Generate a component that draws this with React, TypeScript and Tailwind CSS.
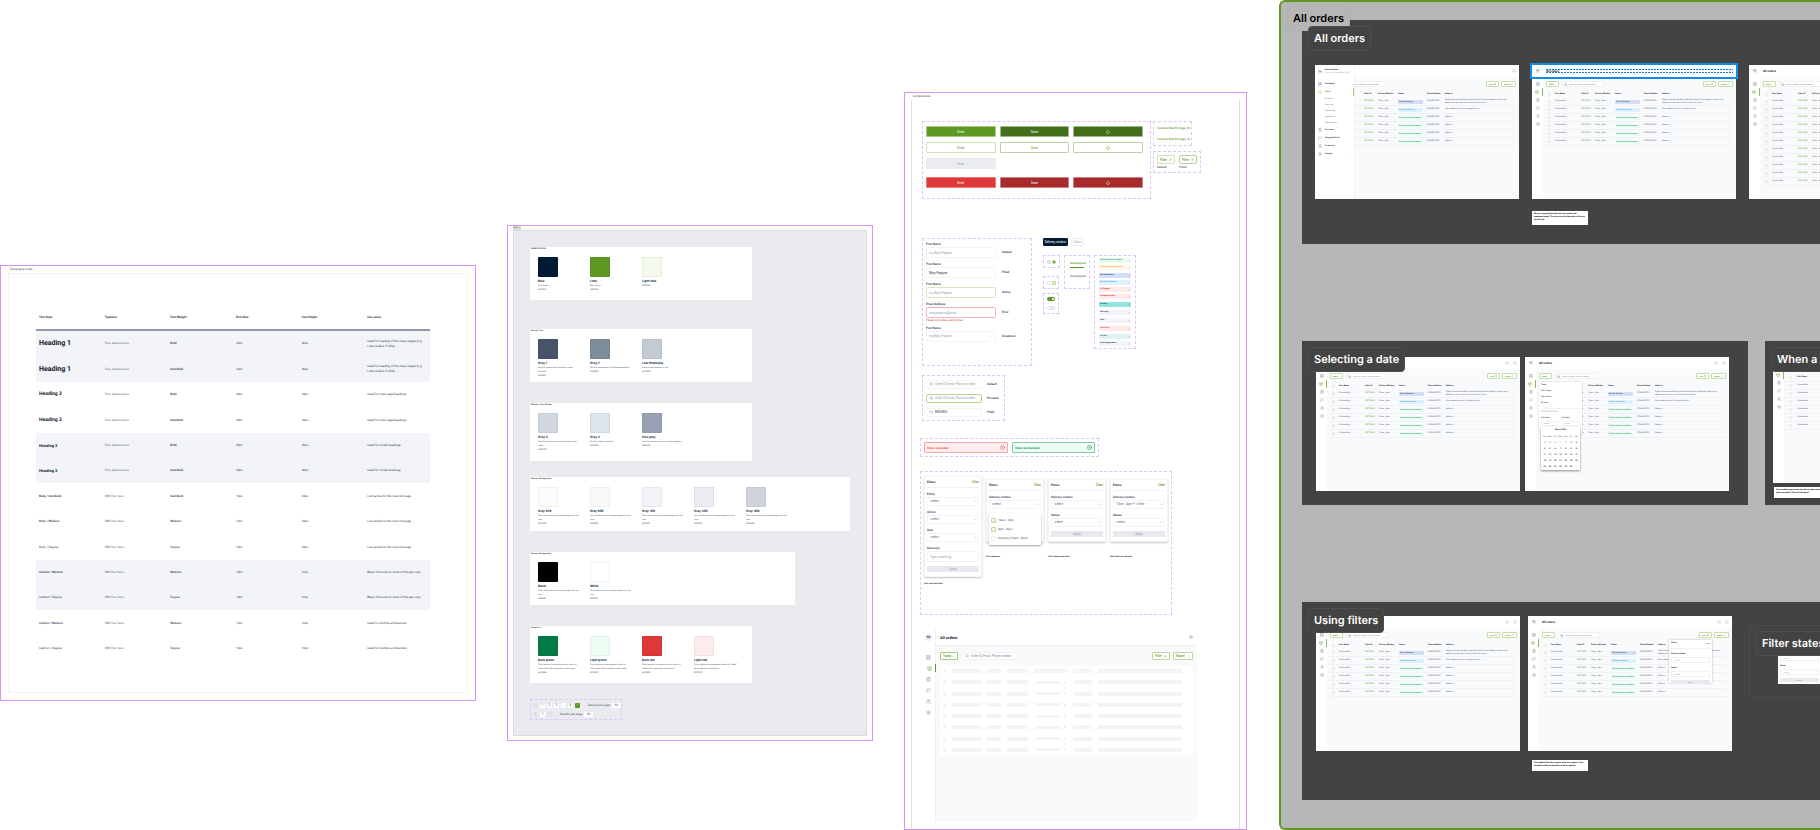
import React, { ReactNode, useId } from "react";
import {
  Bell,
  Box,
  ChevronDown,
  CircleX,
  ClipboardList,
  Flag,
  LayoutGrid,
  LoaderCircle,
  Search,
  Settings,
  SlidersHorizontal,
  Upload,
  Users,
} from "lucide-react";

/* ---------- shared pieces ---------- */

function Board({ label, className, children }: { label: string; className: string; children: ReactNode }) {
  return (
    <section className={`shrink-0 border border-[#db8fff] bg-white ${className}`}>
      <h2 className="h-[7px] pl-[8px] text-[3px] leading-[6px] text-[#444]">{label}</h2>
      {children}
    </section>
  );
}

function Group({ className, children }: { className: string; children?: ReactNode }) {
  return <div className={`shrink-0 rounded-[1px] border border-dashed border-[#dcc6fb] ${className}`}>{children}</div>;
}

/* ---------- typography board ---------- */

type TypeRow = [string, string, string, string, string, string, string, boolean];

const h1 = "text-[7px] font-bold text-[#101828]";
const h2 = "text-[5px] font-bold text-[#101828]";
const h3 = "text-[4px] font-bold text-[#101828]";

const typeRows: TypeRow[] = [
  ["Heading 1", h1, "Plus Jakarta Sans", "Bold", "32px", "40px", "Used for heading of the major pages (e.g Lists, Orders, Profile).", true],
  ["Heading 1", h1, "Plus Jakarta Sans", "Semibold", "32px", "40px", "Used for heading of the major pages (e.g Lists, Orders, Profile).", true],
  ["Heading 2", h2, "Plus Jakarta Sans", "Bold", "24px", "34px", "Used for inner page headings", false],
  ["Heading 2", h2, "Plus Jakarta Sans", "Semibold", "24px", "34px", "Used for inner page headings", false],
  ["Heading 3", h3, "Plus Jakarta Sans", "Bold", "20px", "28px", "Used for modal headings", true],
  ["Heading 3", h3, "Plus Jakarta Sans", "Semibold", "20px", "28px", "Used for modal headings", true],
  ["Body / Semibold", "text-[3px] font-bold", "IBM Plex Sans", "Semibold", "16px", "24px", "List names for the main list page.", false],
  ["Body / Medium", "text-[3px] font-medium", "IBM Plex Sans", "Medium", "16px", "24px", "List names for the main list page.", false],
  ["Body / Regular", "text-[3px]", "IBM Plex Sans", "Regular", "16px", "24px", "List names for the main list page.", false],
  ["Subtext / Medium", "text-[3px] font-medium", "IBM Plex Sans", "Medium", "14px", "21px", "Major font size for most of the app copy", true],
  ["Subtext / Regular", "text-[3px]", "IBM Plex Sans", "Regular", "14px", "21px", "Major font size for most of the app copy", true],
  ["Caption / Medium", "text-[3px] font-medium", "IBM Plex Sans", "Medium", "12px", "16px", "Used for tooltips and banners", false],
  ["Caption / Regular", "text-[3px]", "IBM Plex Sans", "Regular", "12px", "16px", "Used for tooltips and banners", false],
];

function TypographyBoard() {
  return (
    <Board label="Typography scale" className="mt-[265px] w-[476px] pb-[7px]">
      <div className="mx-[7px] border border-[#f3f3f3] px-[27px] pt-[31px] pb-[31px]">
        <table className="w-[394px] table-fixed border-separate border-spacing-0 text-left text-[3px] leading-[5px] text-[#344054]">
          <thead>
            <tr>
              {["Text Style", "Typeface", "Font Weight", "Font Size", "Line Height", "Use cases"].map((t) => (
                <th key={t} className="h-[26px] border-b-2 border-[#8f97ab] pl-[3px] font-bold text-[#1d2939]">
                  {t}
                </th>
              ))}
            </tr>
          </thead>
          <tbody>
            {typeRows.map(([name, style, face, weight, size, line, use, shaded], i) => (
              <tr key={i} className={`${i % 5 === 1 || i % 5 === 3 ? "h-[26px]" : "h-[25px]"} ${shaded ? "bg-[#f2f4f7]" : ""}`}>
                <td className={`pl-[3px] ${style}`}>{name}</td>
                <td className="pl-[3px] text-[#667085]">{face}</td>
                <td className={weight === "Regular" ? "pl-[3px]" : weight === "Medium" ? "pl-[3px] font-medium" : "pl-[3px] font-bold"}>{weight}</td>
                <td className="pl-[3px]">{size}</td>
                <td className="pl-[3px]">{line}</td>
                <td className="pr-[3px] pl-[3px]">{use}</td>
              </tr>
            ))}
          </tbody>
        </table>
      </div>
    </Board>
  );
}

/* ---------- colour board ---------- */

type Swatch = [string, string, string, string];

function SwatchCard({ title, className, items }: { title: string; className: string; items: Swatch[] }) {
  return (
    <article className={`bg-white px-[8px] ${className}`}>
      <h3 className="-ml-[7px] h-[10px] pt-px text-[2px] leading-[3px] font-medium text-[#222]">{title}</h3>
      <ul className="flex">
        {items.map(([name, color, note, hex]) => (
          <li key={name} className="w-[52px] shrink-0 pr-[9px] text-[2px] leading-[4px] text-[#344054]">
            <div className={`size-[20px] rounded-[1px] border border-black/5 ${color}`} />
            <h4 className="mt-[2px] text-[3px] leading-[5px] font-bold text-[#0b2540] [font-family:Inter,sans-serif]">{name}</h4>
            {note && <p>{note}</p>}
            <p>{hex}</p>
          </li>
        ))}
      </ul>
    </article>
  );
}

const discretion = "To be used at discretion depending on the use case.";

function PageButton({ children, tone = "bg-white text-[#344054]" }: { children: ReactNode; tone?: string }) {
  return <button className={`h-[5px] w-[5px] rounded-[1px] text-center text-[3px] leading-[5px] ${tone}`}>{children}</button>;
}

function ColorBoard() {
  const muted = "bg-[#dfe4ec] text-[#98a2b3]";
  return (
    <section className="mt-[225px] ml-[31px] w-[366px] shrink-0 border border-[#db8fff] bg-white px-[5px] pb-[4px]">
      <h2 className="h-[4px] w-[8px] bg-[#d9d9d9] text-[2px] leading-[4px] text-[#444]">Colors</h2>
      <div className="border border-[#dadbdd] bg-[#eaebef] pt-[16px] pb-[15px] pl-[16px]">
        <SwatchCard
          title="BRAND COLORS"
          className="h-[53px] w-[222px]"
          items={[
            ["Blue", "bg-[#021b35]", "Text Colour", "#021B35"],
            ["Lime", "bg-[#5d9922]", "Main Colour", "#5D9922"],
            ["Light lime", "bg-[#f3f9eb]", "", "#F3F9EB"],
          ]}
        />
        <SwatchCard
          title="Neutral / Text"
          className="mt-[29px] h-[53px] w-[222px]"
          items={[
            ["Grey 1", "bg-[#475467]", "Used for subtext that need lower visual hierarchy", "#475467"],
            ["Grey 2", "bg-[#7c8c99]", "Used for placeholder text & disabled buttons", "#7C8C99"],
            ["Low Emphasis", "bg-[#c3cbd3]", "Used for low emphasis in text", "#C3CBD3"],
          ]}
        />
        <SwatchCard
          title="Neutral / Lines, Borders"
          className="mt-[21px] h-[58px] w-[222px]"
          items={[
            ["Grey 3", "bg-[#d0d7df]", "Used for borders on secondary buttons and cards", "#D0D7DF"],
            ["Grey 4", "bg-[#dde5ed]", "Used for dividers and lines", "#DDE5ED"],
            ["Icon grey", "bg-[#98a2b3]", "Used for inactive icons in the side navigation", "#98A2B3"],
          ]}
        />
        <SwatchCard
          title="Neutral / Backgrounds"
          className="mt-[16px] h-[54px] w-[320px]"
          items={[
            ["Gray 025", "bg-[#fcfcfd]", discretion, "#FCFCFD"],
            ["Gray 050", "bg-[#f9fafb]", discretion, "#F9FAFB"],
            ["Gray 100", "bg-[#f2f4f7]", discretion, "#F2F4F7"],
            ["Gray 200", "bg-[#eaecf0]", discretion, "#EAECF0"],
            ["Gray 300", "bg-[#d0d5dd]", discretion, "#D0D5DD"],
          ]}
        />
        <SwatchCard
          title="Neutral / Backgrounds"
          className="mt-[21px] h-[53px] w-[265px]"
          items={[
            ["Black", "bg-black", discretion, "#000000"],
            ["White", "bg-white", discretion, "#FFFFFF"],
          ]}
        />
        <SwatchCard
          title="Semantics"
          className="mt-[21px] h-[57px] w-[222px]"
          items={[
            ["Dark green", "bg-[#027a48]", "To be used as the border and text colour for “successful” alerts and toast notifications", "#027A48"],
            ["Light green", "bg-[#ecfdf3]", "To be used as the background colour for “successful” alerts and toast notifications", "#ECFDF3"],
            ["Dark red", "bg-[#df3838]", "To be used as the border and text colour for “failed” alerts and toast notifications", "#DF3838"],
            ["Light red", "bg-[#ffecec]", "To be used as the background colour for “failed” alerts and toast notifications", "#FFECEC"],
          ]}
        />
        <Group className="mt-[16px] flex h-[21px] w-[92px] flex-col justify-center gap-[4px] pl-[2px] text-[3px] leading-[5px] text-[#475467]">
          <div className="flex items-center gap-[2px]">
            <PageButton tone={muted}>‹</PageButton>
            <PageButton>1</PageButton>
            <PageButton>2</PageButton>
            <PageButton>3</PageButton>
            <PageButton>…</PageButton>
            <PageButton>6</PageButton>
            <PageButton tone="bg-[#5d9922] text-white">›</PageButton>
            <span className="ml-[6px] whitespace-nowrap">Results per page</span>
            <span className="h-[5px] w-[9px] bg-white text-center">50</span>
          </div>
          <div className="flex items-center gap-[2px]">
            <PageButton tone={muted}>‹</PageButton>
            <PageButton>1</PageButton>
            <PageButton tone={muted}>›</PageButton>
            <span className="ml-[6px] whitespace-nowrap">Results per page</span>
            <span className="h-[5px] w-[9px] bg-white text-center">50</span>
          </div>
        </Group>
      </div>
    </section>
  );
}

/* ---------- component board ---------- */

function WideButton({ tone, children }: { tone: string; children: ReactNode }) {
  return (
    <button className={`flex h-[11px] items-center justify-center rounded-[1px] border text-[3px] leading-[4px] ${tone}`}>
      {children}
    </button>
  );
}

function ButtonGroup() {
  const spin = <LoaderCircle size={4} strokeWidth={3} />;
  const lime = "border-[#a5cb7d] bg-[#5d9922] text-white";
  const dark = "border-[#9fb886] bg-[#446f1a] text-white";
  const line = "border-[#cde3b5] bg-white text-[#5d9922]";
  const lineDark = "border-[#bdd0aa] bg-white text-[#5d9922]";
  const red = "border-[#e77] bg-[#df3838] text-white";
  const redDark = "border-[#c98080] bg-[#a82a2a] text-white";
  return (
    <Group className="h-[78px] w-[229px] pt-[4px] pl-[3px]">
      <div className="grid w-[217px] grid-cols-3 gap-x-[4px] gap-y-[5px]">
        <WideButton tone={lime}>Enter</WideButton>
        <WideButton tone={dark}>Done</WideButton>
        <WideButton tone={dark}>{spin}</WideButton>
        <WideButton tone={line}>Enter</WideButton>
        <WideButton tone={lineDark}>Done</WideButton>
        <WideButton tone={lineDark}>{spin}</WideButton>
        <WideButton tone="border-[#eaecf0] bg-[#eaecf0] text-[#98a2b3]">Enter</WideButton>
      </div>
      <div className="mt-[8px] grid w-[217px] grid-cols-3 gap-x-[4px]">
        <WideButton tone={red}>Enter</WideButton>
        <WideButton tone={redDark}>Done</WideButton>
        <WideButton tone={redDark}>{spin}</WideButton>
      </div>
    </Group>
  );
}

function FilterButton({ tone, label }: { tone: string; label: string }) {
  return (
    <div className="flex flex-col">
      <button className={`flex h-[9px] w-[18px] items-center justify-center gap-[2px] rounded-[2px] border text-[3px] leading-[4px] font-medium text-[#5d9922] ${tone}`}>
        Filter
        <SlidersHorizontal size={3} strokeWidth={1} />
      </button>
      <span className="mt-px text-[3px] leading-[4px] text-[#1d2939]">{label}</span>
    </div>
  );
}

function Field({ label, value, placeholder, tone, state, error }: { label: string; value?: string; placeholder?: string; tone: string; state: string; error?: string }) {
  const id = useId();
  return (
    <div className="flex">
      <div className="w-[70px]">
        <label htmlFor={id} className="block h-[4px] text-[3px] leading-[3px] font-medium text-[#1d2939]">
          {label}
        </label>
        <input
          id={id}
          defaultValue={value}
          placeholder={placeholder}
          className={`block h-[11px] w-full rounded-[2px] border bg-white px-[2px] text-[3px] leading-[4px] text-[#1d2939] placeholder:text-[#98a2b3] ${tone}`}
        />
        {error && <p className="mt-px text-[3px] leading-[3px] text-[#df3838]">{error}</p>}
      </div>
      <span className="mt-[7px] ml-[6px] text-[3px] leading-[4px] font-medium text-[#1d2939]">{state}</span>
    </div>
  );
}

function FieldGroup() {
  const id = useId();
  return (
    <Group className="flex h-[128px] w-[110px] flex-col gap-[5px] pt-[4px] pl-[3px]">
      <Field label="First Name" placeholder="e.g Mary Poppins" tone="border-[#f2f4f7]" state="Default" />
      <Field label="First Name" value="Mary Poppins" tone="border-[#f2f4f7]" state="Filled" />
      <Field label="First Name" placeholder="e.g Mary Poppins" tone="border-[#d3e6be]" state="Active" />
      <Field label="Email Address" placeholder="marypoppins@gmail" tone="border-[#f7b5b5]" state="Error" error="Please provide a valid email" />
      <div className="flex">
        <div className="relative w-[70px]">
          <label htmlFor={id} className="block h-[4px] text-[3px] leading-[3px] font-medium text-[#1d2939]">
            First Name
          </label>
          <select id={id} className="block h-[11px] w-full appearance-none rounded-[2px] border border-[#f2f4f7] bg-white px-[2px] text-[3px] text-[#98a2b3]">
            <option>e.g Mary Poppins</option>
          </select>
          <ChevronDown size={3} className="absolute right-[3px] bottom-[4px] text-[#98a2b3]" />
        </div>
        <span className="mt-[7px] ml-[6px] text-[3px] leading-[4px] font-medium text-[#1d2939]">Dropdown</span>
      </div>
    </Group>
  );
}

function SearchField({ value, tone, state }: { value?: string; tone: string; state: string }) {
  return (
    <div className="flex items-center">
      <label className={`flex h-[9px] w-[56px] items-center gap-[2px] rounded-[2px] border bg-white pl-[2px] ${tone}`}>
        <Search size={4} className="shrink-0 text-[#7c8c99]" aria-label="Search" />
        <input defaultValue={value} placeholder="Order ID, Email, Phone number" className="h-[5px] w-[44px] text-[3px] leading-[4px] text-[#1d2939] placeholder:text-[#98a2b3]" />
      </label>
      <span className="ml-[5px] text-[3px] leading-[4px] font-medium text-[#1d2939]">{state}</span>
    </div>
  );
}

const statuses: [string, string][] = [
  ["Delivered within window", "mb-[2px] bg-[#e8faf0] text-[#1d9a5f]"],
  ["Delivered outside window", "mb-[3px] bg-[#fff7e9] text-[#f5a532]"],
  ["Out for delivery", "mb-[2px] bg-[#d5def4] text-[#27407c]"],
  ["Ready for delivery", "mb-[2px] bg-[#def3ff] text-[#3aa6e8]"],
  ["QA flagged", "mb-[2px] bg-[#ffe9e9] text-[#df3838]"],
  ["Incomplete order", "mb-[3px] bg-[#ffe9e9] text-[#df3838]"],
  ["Routing", "mb-[3px] bg-[#95e3df] text-[#12605c]"],
  ["Sourcing", "mb-[3px] bg-[#f2f4f7] text-[#344054]"],
  ["Paid", "mb-[3px] bg-[#f2f4f7] text-[#344054]"],
  ["Cancelled", "mb-[3px] bg-[#ffe9e9] text-[#df3838]"],
  ["Packed", "mb-[2px] bg-[#e2f2f1] text-[#256e68]"],
  ["Awaiting payment", "bg-[#f2f4f7] text-[#344054]"],
];

function StatusGroup() {
  return (
    <Group className="h-[94px] w-[42px] px-[4px] pt-[2px]">
      <ul>
        {statuses.map(([name, tone]) => (
          <li key={name} className={`flex h-[5px] items-center justify-between rounded-[1px] px-px text-[2px] leading-[5px] font-bold whitespace-nowrap ${tone}`}>
            {name}
            <ChevronDown size={2} strokeWidth={3} />
          </li>
        ))}
      </ul>
    </Group>
  );
}

function ControlsColumn() {
  return (
    <div className="ml-[11px] w-[93px]">
      <div className="flex gap-[3px] text-[3px] leading-[6px]">
        <button className="h-[8px] w-[25px] rounded-[1px] border border-[#021b35] bg-[#021b35] whitespace-nowrap text-white">Delivery window</button>
        <button className="h-[8px] w-[13px] rounded-[2px] border border-[#eaecf0] text-[#98a2b3]">Status</button>
      </div>
      <div className="mt-[9px] flex gap-[4px]">
        <div>
          <Group className="flex h-[13px] w-[17px] items-center justify-center gap-[1px]">
            <input type="radio" name="sample" aria-label="Off" className="size-[4px] appearance-none rounded-full border border-[#c3cbd3]" />
            <input type="radio" name="sample" aria-label="On" defaultChecked className="size-[4px] appearance-none rounded-full border border-[#b5d68f] bg-[#5d9922]" />
          </Group>
          <Group className="mt-[8px] flex h-[13px] w-[16px] items-center justify-center gap-[1px]">
            <input type="checkbox" aria-label="Unticked" className="size-[4px] appearance-none rounded-[1px] border border-[#dfe4ea]" />
            <input type="checkbox" aria-label="Ticked" defaultChecked className="size-[4px] appearance-none rounded-[1px] border border-[#b5d68f] bg-[#e8f3da]" />
          </Group>
          <Group className="mt-[4px] flex h-[21px] w-[16px] flex-col items-center justify-center gap-[5px]">
            <label className="flex h-[4px] w-[8px] justify-end rounded-full bg-[#5d9922] p-px">
              <input type="checkbox" role="switch" aria-label="Enabled" defaultChecked className="size-[2px] appearance-none rounded-full bg-white" />
            </label>
            <label className="flex h-[4px] w-[8px] rounded-full bg-[#e4e7ec] p-px">
              <input type="checkbox" role="switch" aria-label="Disabled" className="size-[2px] appearance-none rounded-full bg-white" />
            </label>
          </Group>
        </div>
        <Group className="h-[34px] w-[26px] px-[5px] pt-[5px] text-[3px] leading-[5px] font-medium">
          <a href="#unassigned" className="block border-b border-[#5d9922] pb-px whitespace-nowrap text-[#5d9922]">
            Unassigned
          </a>
          <a href="#unassigned" className="mt-[6px] block whitespace-nowrap text-[#667085]">
            Unassigned
          </a>
        </Group>
        <StatusGroup />
      </div>
    </div>
  );
}

function FilterSelect({ label, value }: { label: string; value: string }) {
  const id = useId();
  return (
    <div className="relative mt-[4px]">
      <label htmlFor={id} className="block text-[3px] leading-[4px] font-medium text-[#1d2939]">
        {label}
      </label>
      <select id={id} className="mt-px block h-[9px] w-full appearance-none rounded-[1px] border border-[#f2f4f7] bg-white px-[2px] text-[3px] text-[#667085]">
        <option>{value}</option>
      </select>
      <ChevronDown size={3} className="absolute right-[2px] bottom-[3px] text-[#667085]" />
    </div>
  );
}

function FilterPanel({ children, caption, className }: { children: ReactNode; caption: string; className: string }) {
  return (
    <div className="w-[58px]">
      <div className={`relative rounded-[1px] border border-[#f2f4f7] bg-white px-[2px] pb-[3px] shadow-[0_1px_2px_rgba(16,24,40,0.25)] ${className}`}>
        <div className="flex h-[11px] items-center justify-between border-b border-[#f0f1f4] text-[3px] leading-[4px]">
          <h4 className="font-bold text-[#101828]">Filters</h4>
          <button className="font-medium text-[#5d9922]">Clear</button>
        </div>
        {children}
      </div>
      <p className="text-[2px] leading-[3px] font-bold whitespace-nowrap text-[#101828]">{caption}</p>
    </div>
  );
}

function ApplyButton({ className }: { className: string }) {
  return <button className={`block h-[6px] w-full bg-[#e7e9ee] text-[3px] leading-[6px] text-[#98a2b3] ${className}`}>Apply</button>;
}

function FilterGroup() {
  const id = useId();
  return (
    <Group className="mt-[14px] flex h-[144px] w-[252px] items-start gap-[4px] pt-[4px] pl-[3px]">
      <FilterPanel caption="Filter with input field" className="mb-[6px] h-[101px]">
        <FilterSelect label="Entity" value="-select-" />
        <FilterSelect label="Action" value="-select-" />
        <FilterSelect label="User" value="-select-" />
        <label htmlFor={id} className="mt-[4px] block text-[3px] leading-[4px] font-medium text-[#1d2939]">
          Device(s)
        </label>
        <input id={id} placeholder="Type something" className="mt-px block h-[11px] w-full rounded-[1px] border border-[#f2f4f7] px-[2px] text-[3px] placeholder:text-[#98a2b3]" />
        <ApplyButton className="mt-[4px]" />
      </FilterPanel>
      <div className="mt-[3px] flex gap-[4px]">
        <FilterPanel caption="Filter dropdown" className="mb-[14px] h-[63px]">
          <FilterSelect label="Delivery window" value="-select-" />
          <div className="absolute top-[33px] left-[2px] flex h-[32px] w-[52px] flex-col justify-center gap-[4px] rounded-[1px] bg-white pl-[2px] text-[3px] leading-[5px] text-[#475467] shadow-[0_1px_2px_rgba(16,24,40,0.4)]">
            {["10am - 4pm", "4pm - 8pm", "Anytime (10am - 8pm)"].map((t, i) => (
              <label key={t} className="flex items-center gap-[2px] whitespace-nowrap">
                <input type="checkbox" defaultChecked={i < 2} className="size-[5px] appearance-none rounded-[1px] border border-[#eaecf0] checked:border-[#bcd99b] checked:bg-[#eff7e5]" />
                {t}
              </label>
            ))}
          </div>
        </FilterPanel>
        <FilterPanel caption="Filter without input field" className="mb-[14px] h-[63px]">
          <FilterSelect label="Delivery window" value="-select-" />
          <FilterSelect label="Status" value="-select-" />
          <ApplyButton className="mt-[4px]" />
        </FilterPanel>
        <FilterPanel caption="After filters are selected" className="mb-[14px] h-[63px]">
          <FilterSelect label="Delivery window" value="10am - 4pm + 1 other" />
          <FilterSelect label="Status" value="-select-" />
          <ApplyButton className="mt-[4px]" />
        </FilterPanel>
      </div>
    </Group>
  );
}

const navIcons = [LayoutGrid, Box, ClipboardList, Flag, Users, Settings];

function Bar({ className }: { className: string }) {
  return <span className={`h-[4px] shrink-0 rounded-[1px] bg-[#f2f4f7] ${className}`} />;
}

function SkeletonApp() {
  return (
    <div className="mt-[14px] ml-[3px] flex h-[193px] w-[274px]">
      <nav className="flex w-[13px] shrink-0 flex-col items-center border-r border-[#eff1f4] pt-[5px] pr-px">
        <span className="mb-[12px] h-[7px] w-[7px] rounded-full bg-[#eaecf0] text-center text-[3px] leading-[7px] font-bold text-[#1d2939]">EA</span>
        {navIcons.map((Icon, i) => (
          <a
            key={i}
            href="#nav"
            aria-label="Section"
            className={
              i === 1
                ? "-mr-[2px] mb-[3px] flex h-[8px] w-[13px] items-center border-r border-[#5d9922] pl-[4px] text-[#5d9922]"
                : "mb-[3px] flex h-[8px] items-center text-[#8f97ab]"
            }
          >
            <Icon size={5} />
          </a>
        ))}
      </nav>
      <div className="flex-1 bg-[#f9fafb]">
        <header className="flex h-[17px] items-center justify-between border-b border-[#eff1f4] bg-white px-[4px]">
          <h3 className="text-[4px] leading-[5px] font-bold text-[#101828]">All orders</h3>
          <Bell size={4} className="text-[#475467]" />
        </header>
        <div className="px-[4px] pt-[6px]">
          <div className="flex h-[8px] items-center text-[3px] leading-[4px]">
            <button className="h-[8px] w-[18px] rounded-[1px] border border-[#a5cb7d] bg-white font-medium text-[#5d9922]">Today ⌄</button>
            <label className="ml-[4px] flex h-[8px] w-[57px] items-center gap-[2px] rounded-[2px] border border-[#eff1f4] bg-white pl-[2px]">
              <Search size={4} className="text-[#7c8c99]" aria-label="Search" />
              <input placeholder="Order ID, Email, Phone number" className="h-[5px] w-[46px] placeholder:text-[#7c8c99]" />
            </label>
            <button className="ml-auto flex h-[8px] w-[18px] items-center justify-center gap-[2px] rounded-[1px] border border-[#bcd99b] bg-white font-medium text-[#5d9922]">
              Filter <SlidersHorizontal size={3} strokeWidth={1} />
            </button>
            <button className="ml-[3px] flex h-[8px] w-[20px] items-center justify-center gap-[2px] rounded-[1px] border border-[#bcd99b] bg-white font-medium text-[#5d9922]">
              Export <Upload size={3} strokeWidth={1} />
            </button>
          </div>
          <div className="mt-[6px] flex h-[89px] flex-col justify-between bg-white px-[3px] py-[3px]">
            {[0, 1, 2, 3, 4, 5, 6, 7].map((i) => (
              <div key={i} className="flex items-center">
                <Bar className="w-[3px]" />
                <Bar className="ml-[6px] w-[29px]" />
                <Bar className="ml-[6px] w-[14px]" />
                <Bar className="ml-[6px] w-[21px]" />
                {i === 0 ? (
                  <Bar className="ml-[6px] w-[33px]" />
                ) : (
                  <span className="ml-[7px] flex w-[32px] items-center gap-[3px]">
                    <span className="h-[3px] w-[26px] rounded-[1px] bg-[#f2f4f7]" />
                    <span className="size-px bg-[#d0d5dd]" />
                  </span>
                )}
                <Bar className="ml-[6px] w-[19px]" />
                <Bar className="ml-[6px] w-[84px]" />
              </div>
            ))}
          </div>
        </div>
      </div>
    </div>
  );
}

function ComponentBoard() {
  return (
    <Board label="Components" className="mt-[92px] ml-[31px] w-[343px]">
      <div className="mx-[6px] border-x border-[#dedede] pt-[21px] pb-[7px] pl-[8px]">
        <div className="ml-[2px] flex items-start gap-[2px]">
          <ButtonGroup />
          <div>
            <Group className="h-[25px] w-[39px] pt-[4px] pl-[3px] text-[3px] leading-[5px] font-medium whitespace-nowrap text-[#5d9922]">
              <p>Yummie Red Portage, IA</p>
              <p className="mt-[6px]">Yummie Red Portage, IA</p>
            </Group>
            <Group className="mt-[5px] flex h-[22px] w-[48px] gap-[4px] pt-[3px] pl-[3px]">
              <FilterButton tone="border-[#cde3b5]" label="Default" />
              <FilterButton tone="border-[#b5cd9d]" label="Hover" />
            </Group>
          </div>
        </div>
        <div className="mt-[39px] ml-[2px] flex items-start">
          <FieldGroup />
          <ControlsColumn />
        </div>
        <Group className="mt-[9px] ml-[2px] flex h-[46px] w-[83px] flex-col justify-center gap-[5px] pl-[3px]">
          <SearchField tone="border-[#f2f4f7]" state="Default" />
          <SearchField tone="border-[#b5d68f]" state="Focused" />
          <SearchField tone="border-[#f2f4f7]" state="Filled" value="EKS2853" />
        </Group>
        <Group className="mt-[17px] flex h-[19px] w-[179px] items-center gap-[4px] px-[3px] text-[3px] leading-[4px] font-medium">
          <div role="alert" className="flex h-[11px] w-[84px] items-center justify-between rounded-[1px] border border-[#f0a8a8] bg-[#ffecec] px-[2px] text-[#df3838]">
            Order cancelled. <CircleX size={5} />
          </div>
          <div role="alert" className="flex h-[11px] w-[83px] items-center justify-between rounded-[1px] border border-[#8cc7aa] bg-[#ecfdf3] px-[2px] text-[#027a48]">
            Order rescheduled. <CircleX size={5} />
          </div>
        </Group>
        <FilterGroup />
        <SkeletonApp />
      </div>
    </Board>
  );
}

/* ---------- order screens ---------- */

const subItems = ["All orders", "Sourcing", "Processing", "Partial cost", "Order Tracker"];

function MenuLine({ icon: Icon, text, active, arrow }: { icon: typeof Box; text: string; active?: boolean; arrow?: boolean }) {
  return (
    <a href="#menu" className={`flex h-[8px] items-center gap-[3px] pl-[3px] text-[2px] font-bold ${active ? "border-r border-[#a9cd80] text-[#5d9922]" : "text-[#344054]"}`}>
      <Icon size={4} strokeWidth={1} />
      {text}
      {arrow && <ChevronDown size={2} className="mr-[2px] ml-auto" />}
    </a>
  );
}

function OpenMenu() {
  return (
    <nav className="absolute top-0 left-0 h-full w-[39px] bg-white text-[2px] leading-[3px] shadow-[0_0_1px_rgba(0,0,0,0.2)]">
      <div className="flex h-[15px] items-center gap-[3px] pb-[2px] pl-[3px]">
        <span className="size-[4px] rounded-full bg-[#dfe3ea] text-center leading-[4px] text-[#344054]">EA</span>
        <span className="whitespace-nowrap">
          <b className="block text-[#1d2939]">Azeez Ibrahim</b>
          <span className="block text-[#98a2b3]">Customer Happy Rep (CHR)</span>
        </span>
      </div>
      <MenuLine icon={LayoutGrid} text="Dashboard" />
      <MenuLine icon={Box} text="Orders" active arrow />
      <ul className="pl-[10px]">
        {subItems.map((t, i) => (
          <li key={t} className={`h-[6px] leading-[6px] ${i === 0 ? "text-[#5d9922]" : "text-[#667085]"}`}>
            {t}
          </li>
        ))}
      </ul>
      <MenuLine icon={ClipboardList} text="Discounts" />
      <MenuLine icon={Flag} text="Shopping Portal" />
      <MenuLine icon={Users} text="Customers" />
      <MenuLine icon={Settings} text="Settings" arrow />
    </nav>
  );
}

const longAddress = "Pyakit International Nursery And Primary School, Akajomo road, Long addresses can move to the second line, when...";

type ScreenProps = { rows?: number; plain?: boolean; twoIcons?: boolean; untitled?: boolean; height?: string; children?: ReactNode };

function OrderScreen({ rows = 6, plain, twoIcons, untitled, height = "h-[134px]", children }: ScreenProps) {
  return (
    <article className={`relative flex w-[204px] shrink-0 overflow-hidden bg-white text-[2px] leading-[3px] text-[#475467] ${height}`}>
      <nav className="flex w-[11px] shrink-0 flex-col items-center">
        <span className="mt-[4px] mb-[7px] size-[4px] rounded-full bg-[#dfe3ea] text-center leading-[4px] text-[#344054]">{untitled ? "" : "EA"}</span>
        {navIcons.map((Icon, i) => (
          <a
            key={i}
            href="#nav"
            aria-label="Section"
            className={i === 1 ? "flex h-[8px] w-full items-center justify-center border-r border-[#8fbb62] text-[#5d9922]" : "flex h-[8px] items-center text-[#8f97ab]"}
          >
            <Icon size={4} />
          </a>
        ))}
      </nav>
      <div className="min-w-0 flex-1 bg-[#f9fafb]">
        <header className="flex h-[12px] items-center justify-end gap-[4px] bg-white px-[3px]">
          {!untitled && <h4 className="mr-auto text-[3px] font-bold text-[#101828]">All orders</h4>}
          {twoIcons && <Search size={4} strokeWidth={1} />}
          <Bell size={4} strokeWidth={1} />
        </header>
        <div className="flex items-center px-[3px] pt-[4px]">
          <button className="h-[6px] w-[13px] rounded-[1px] border border-[#c5dfa8] bg-white leading-[4px] font-bold text-[#5d9922]">Today ⌄</button>
          <label className="ml-[3px] flex h-[6px] w-[42px] items-center gap-[2px] rounded-[1px] border border-[#f0f1f4] bg-white pl-px">
            <Search size={3} aria-label="Search" />
            <input placeholder="Order ID, Email, Phone number" className="h-[4px] w-[32px] placeholder:text-[#7c8c99]" />
          </label>
          <button className="ml-auto flex h-[6px] w-[13px] items-center justify-center gap-px rounded-[1px] border border-[#c5dfa8] bg-white leading-[4px] font-bold text-[#5d9922]">
            Filter <SlidersHorizontal size={2} />
          </button>
          <button className="ml-[2px] flex h-[6px] w-[15px] items-center justify-center gap-px rounded-[1px] border border-[#c5dfa8] bg-white leading-[4px] font-bold text-[#5d9922]">
            Export <Upload size={2} />
          </button>
        </div>
        <table className="mt-[4px] ml-[3px] w-[186px] table-fixed border-separate border-spacing-0 text-left whitespace-nowrap">
          <colgroup>
            <col className="w-[9px]" />
            <col className="w-[26px]" />
            <col className="w-[14px]" />
            <col className="w-[20px]" />
            <col className="w-[29px]" />
            <col className="w-[18px]" />
            <col />
            <col className="w-[4px]" />
          </colgroup>
          <thead>
            <tr className="h-[7px] text-[#1d2939]">
              <th className="pl-[2px]">
                <input type="checkbox" aria-label="Select all" className="block size-[3px] appearance-none rounded-[1px] border border-[#e4e7ec]" />
              </th>
              {["User Name", "Order ID", "Delivery Window", "Status", "Phone Number", "Address"].map((t) => (
                <th key={t} className="font-bold">
                  {t}
                </th>
              ))}
              <th />
            </tr>
          </thead>
          <tbody>
            {Array.from({ length: rows }, (_, i) => {
              const kind = plain ? 2 : Math.min(i, 2);
              return (
                <tr key={i}>
                  <td className="h-[8px] border-b border-[#f0f2f5] pl-[2px]">
                    <input type="checkbox" aria-label="Select order" className="block size-[3px] appearance-none rounded-[1px] border border-[#e4e7ec]" />
                  </td>
                  <td className="border-b border-[#f0f2f5]">Chioma Ada</td>
                  <td className="border-b border-[#f0f2f5] text-[#5d9922]">EAT7302A</td>
                  <td className="border-b border-[#f0f2f5]">10am - 4pm</td>
                  <td className="border-b border-[#f0f2f5]">
                    <span
                      className={`flex h-[4px] w-[25px] items-center justify-between rounded-[1px] px-px leading-[4px] font-medium ${
                        kind === 0 ? "bg-[#d5def4] text-[#27407c]" : kind === 1 ? "bg-[#def3ff] text-[#3aa6e8]" : "bg-[#ecfdf3] text-[#1d9a5f]"
                      }`}
                    >
                      {kind === 0 ? "Out for delivery" : kind === 1 ? "Ready for delivery" : "Delivered within window"}
                      <ChevronDown size={2} />
                    </span>
                  </td>
                  <td className="border-b border-[#f0f2f5]">07062812872</td>
                  <td className="border-b border-[#f0f2f5] whitespace-normal">{kind === 0 ? longAddress : kind === 1 ? "Short addresses will sit simply like this" : "Address"}</td>
                  <td className="border-b border-[#f0f2f5] text-center font-bold">⋮</td>
                </tr>
              );
            })}
          </tbody>
        </table>
      </div>
      {children}
    </article>
  );
}

function Note({ className, children }: { className: string; children: ReactNode }) {
  return <p className={`shrink-0 overflow-hidden bg-white px-[2px] text-[2px] leading-[3px] font-bold text-black ${className}`}>{children}</p>;
}

function Tag({ className, children }: { className: string; children: ReactNode }) {
  return (
    <h2 className={`absolute z-10 h-[25px] rounded-[4px] border px-[5px] text-[11px] leading-[23px] font-semibold whitespace-nowrap [font-family:Inter,sans-serif] ${className}`}>
      {children}
    </h2>
  );
}

const darkTag = "border-[#4e4e4e] bg-[#434343] text-white";
const weekdays = ["Sun", "Mon", "Tue", "Wed", "Thu", "Fri", "Sat"];

function DatePopup() {
  return (
    <>
      <div className="absolute top-[25px] left-[14px] h-[52px] w-[43px] bg-white px-[2px] pt-[2px] text-[#344054] shadow-[0_0_1px_rgba(16,24,40,0.35)]">
        <ul className="border-b border-[#eff1f4] font-medium">
          {["Today", "Past 7 days", "Past month", "All time"].map((t) => (
            <li key={t} className="h-[6px]">
              {t}
            </li>
          ))}
        </ul>
        <p className="mt-[2px] text-[#98a2b3]">SET CUSTOM DATE</p>
        <div className="mt-[3px] flex gap-[3px]">
          {["Start date", "End date"].map((t) => (
            <label key={t} className="w-[18px] font-medium">
              {t}
              <select className="mt-px block h-[5px] w-full appearance-none rounded-[1px] border border-[#f0f1f4] pl-px text-[#98a2b3]">
                <option>-select-</option>
              </select>
            </label>
          ))}
        </div>
      </div>
      <div className="absolute top-[70px] left-[16px] h-[43px] w-[39px] bg-white px-px shadow-[0_1px_2px_rgba(16,24,40,0.5)]">
        <div className="flex h-[7px] items-center justify-between px-px">
          <button aria-label="Previous month">‹</button>
          <b className="text-[#101828]">March 2024</b>
          <button aria-label="Next month">›</button>
        </div>
        <div className="grid grid-cols-7 text-center leading-[6px]">
          {weekdays.map((d) => (
            <span key={d}>{d}</span>
          ))}
          {Array.from({ length: 35 }, (_, i) => {
            const day = i < 4 ? 28 + i : i > 33 ? 1 : i - 3;
            return (
              <span key={i} className={i < 4 || i > 33 ? "text-[#98a2b3]" : "font-bold text-[#1d2939]"}>
                {day}
              </span>
            );
          })}
        </div>
      </div>
    </>
  );
}

function MiniSelect({ label }: { label: string }) {
  return (
    <label className="mt-[4px] block font-bold text-[#1d2939]">
      {label}
      <select className="mt-px block h-[6px] w-full appearance-none rounded-[1px] border border-[#f0f1f4] bg-white pl-[2px] font-normal text-[#98a2b3]">
        <option>-select-</option>
      </select>
    </label>
  );
}

function FilterPopup() {
  return (
    <div className="absolute top-[24px] right-[20px] h-[43px] w-[43px] bg-white px-[2px] pt-[2px] shadow-[0_0_2px_rgba(16,24,40,0.3)]">
      <div className="flex justify-between border-b border-[#eff1f4] pb-[3px]">
        <b className="text-[#101828]">Filters</b>
        <button className="font-medium text-[#5d9922]">Clear</button>
      </div>
      <MiniSelect label="Delivery window" />
      <MiniSelect label="Status" />
      <button className="mt-[3px] block h-[4px] w-full bg-[#e7e9ee] leading-[4px] text-[#98a2b3]">Apply</button>
    </div>
  );
}

function DashRow() {
  return <div className="h-px bg-[repeating-linear-gradient(90deg,#0d78cf_0px,#0d78cf_2px,transparent_2px,transparent_3px)]" />;
}

function FlowSection() {
  return (
    <section className="relative ml-[32px] min-w-0 flex-1 self-start overflow-hidden rounded-l-[6px] border-2 border-r-0 border-[#5d9922] bg-[#b6b6b6] pt-[18px] pb-[28px] pl-[21px]">
      <Tag className="top-[4px] left-[6px] border-[#b0b0b0] bg-[#b6b6b6] text-black">All orders</Tag>

      <div className="relative h-[224px] overflow-hidden bg-[#434343] pt-[45px] pl-[13px]">
        <Tag className={`top-[6px] left-[6px] ${darkTag}`}>All orders</Tag>
        <div className="flex gap-[13px]">
          <OrderScreen untitled>
            <OpenMenu />
          </OrderScreen>
          <div className="relative shrink-0">
            <OrderScreen />
            <div className="absolute -top-[2px] -left-[2px] flex h-[16px] w-[208px] flex-col gap-[2px] border-2 border-[#0d8ce9] pt-[4px] pr-[3px] pl-[14px]">
              <DashRow />
              <DashRow />
            </div>
          </div>
          <OrderScreen rows={11} plain />
        </div>
        <Note className="mt-[12px] ml-[217px] h-[14px] w-[56px] pt-[2px]">
          We are using ellipses when the text reaches the maximum length. The user can click the order cell to see the full text
        </Note>
      </div>

      <div className="mt-[97px] flex gap-[17px]">
        <div className="relative h-[164px] w-[446px] shrink-0 bg-[#434343] pt-[16px] pl-[14px]">
          <Tag className={`top-[6px] left-[6px] ${darkTag}`}>Selecting a date</Tag>
          <div className="flex gap-[5px]">
            <OrderScreen twoIcons untitled />
            <OrderScreen twoIcons>
              <DatePopup />
            </OrderScreen>
          </div>
        </div>
        <div className="relative h-[164px] min-w-0 flex-1 overflow-hidden bg-[#434343] pt-[30px] pl-[8px]">
          <Tag className={`top-[6px] left-[6px] ${darkTag}`}>When a filter is selected</Tag>
          <div className="flex h-[112px] w-[204px] bg-white text-[2px] leading-[3px] text-[#475467]">
            <nav className="flex w-[11px] shrink-0 flex-col items-center">
              {navIcons.slice(1).map((Icon, i) => (
                <a
                  key={i}
                  href="#nav"
                  aria-label="Section"
                  className={i === 0 ? "flex h-[8px] w-full items-center justify-center border-r border-[#8fbb62] text-[#5d9922]" : "flex h-[8px] items-center text-[#8f97ab]"}
                >
                  <Icon size={4} />
                </a>
              ))}
            </nav>
            <ul className="flex-1 bg-[#f9fafb] pt-[3px]">
              {["User Name", "Chioma Ada", "Chioma Ada", "Chioma Ada", "Chioma Ada", "Chioma Ada", "Chioma Ada"].map((t, i) => (
                <li key={i} className={`flex h-[8px] items-center border-b border-[#f0f2f5] pl-[5px] ${i === 0 ? "font-bold text-[#1d2939]" : ""}`}>
                  <input type="checkbox" aria-label={t} className="mr-[5px] size-[3px] appearance-none rounded-[1px] border border-[#e4e7ec]" />
                  {t}
                </li>
              ))}
            </ul>
          </div>
          <Note className="mt-[4px] ml-px h-[11px] w-[56px] pt-[2px]">Can we add a way to state the delivery date when the rider is on order? (Part of call items)?</Note>
        </div>
      </div>

      <div className="relative mt-[97px] h-[198px] bg-[#434343] pt-[14px] pl-[14px]">
        <Tag className={`top-[6px] left-[6px] ${darkTag}`}>Using filters</Tag>
        <div className="flex gap-[8px]">
          <OrderScreen twoIcons untitled height="h-[135px]" />
          <OrderScreen twoIcons height="h-[135px]">
            <FilterPopup />
          </OrderScreen>
          <div className="relative mt-[9px] ml-[9px] h-[73px] w-[120px] shrink-0 border border-[#4a4a4a] pt-[30px] pl-[28px]">
            <Tag className={`top-[5px] left-[6px] ${darkTag}`}>Filter states</Tag>
            <div className="h-[28px] w-[43px] bg-white px-[2px] text-[2px] leading-[3px] text-[#475467]">
              <select aria-label="Delivery window" className="block h-[5px] w-full appearance-none border border-t-0 border-[#f0f1f4] pl-[2px] text-[#98a2b3]">
                <option>-select-</option>
              </select>
              <MiniSelect label="Status" />
              <button className="mt-[3px] block h-[4px] w-full bg-[#e7e9ee] leading-[4px] text-[#98a2b3]">Apply</button>
            </div>
          </div>
        </div>
        <Note className="mt-[9px] ml-[216px] h-[11px] w-[56px] pt-[2px]">The modal of the filter comes inside the viewport. So it should be within to avoid the scroll on mobiles</Note>
      </div>
    </section>
  );
}

export default function App() {
  return (
    <main className="flex min-h-screen items-start overflow-hidden bg-white [font-family:Roboto,sans-serif] [text-rendering:geometricPrecision]">
      <TypographyBoard />
      <ColorBoard />
      <ComponentBoard />
      <FlowSection />
    </main>
  );
}
